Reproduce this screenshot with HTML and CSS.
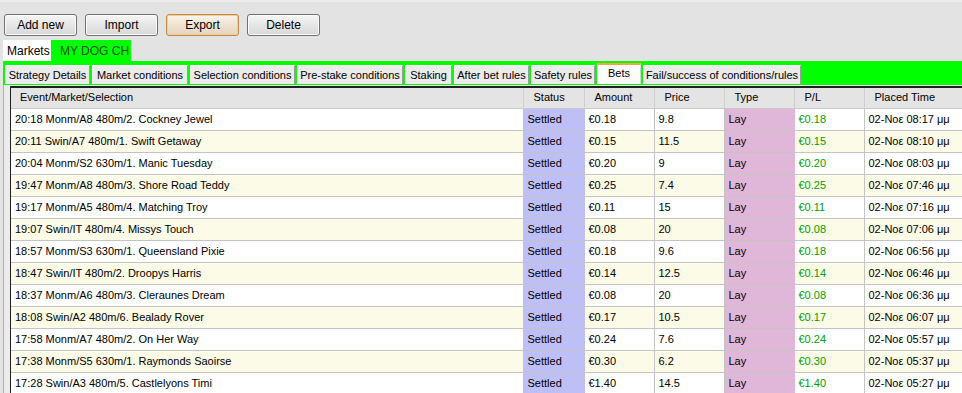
FILE: index.html
```html
<!DOCTYPE html>
<html>
<head>
<meta charset="utf-8">
<link rel="stylesheet" href="styles.css">
</head>
<body>
<div class="app">
  <div class="toolbar">
    <button class="btn">Add new</button>
    <button class="btn">Import</button>
    <button class="btn btn-focus">Export</button>
    <button class="btn">Delete</button>
  </div>
  <div class="outer-tabs">
    <div class="otab otab-plain">Markets</div>
    <div class="otab otab-green">MY DOG CH</div>
  </div>
  <div class="green-panel">
    <div class="itabs">
      <div class="itab w-strategy">Strategy Details</div>
      <div class="itab w-market">Market conditions</div>
      <div class="itab w-selection">Selection conditions</div>
      <div class="itab w-prestake">Pre-stake conditions</div>
      <div class="itab w-staking">Staking</div>
      <div class="itab w-after">After bet rules</div>
      <div class="itab w-safety">Safety rules</div>
      <div class="itab itab-active w-bets">Bets</div>
      <div class="itab w-fail">Fail/success of conditions/rules</div>
    </div>
  </div>
  <div class="content">
    <div class="grid-wrap">
      <table class="grid">
        <colgroup>
          <col class="c-event"><col class="c-status"><col class="c-num"><col class="c-num"><col class="c-num"><col class="c-num"><col class="c-time">
        </colgroup>
        <thead>
          <tr>
            <th class="h-event">Event/Market/Selection</th>
            <th class="h-status">Status</th>
            <th>Amount</th>
            <th>Price</th>
            <th>Type</th>
            <th>P/L</th>
            <th>Placed Time</th>
          </tr>
        </thead>
        <tbody>
          <tr><td>20:18 Monm/A8 480m/2. Cockney Jewel</td><td class="st">Settled</td><td>€0.18</td><td>9.8</td><td class="ty">Lay</td><td class="pl">€0.18</td><td>02-Νοε 08:17 μμ</td></tr>
          <tr class="alt"><td>20:11 Swin/A7 480m/1. Swift Getaway</td><td class="st">Settled</td><td>€0.15</td><td>11.5</td><td class="ty">Lay</td><td class="pl">€0.15</td><td>02-Νοε 08:10 μμ</td></tr>
          <tr><td>20:04 Monm/S2 630m/1. Manic Tuesday</td><td class="st">Settled</td><td>€0.20</td><td>9</td><td class="ty">Lay</td><td class="pl">€0.20</td><td>02-Νοε 08:03 μμ</td></tr>
          <tr class="alt"><td>19:47 Monm/A8 480m/3. Shore Road Teddy</td><td class="st">Settled</td><td>€0.25</td><td>7.4</td><td class="ty">Lay</td><td class="pl">€0.25</td><td>02-Νοε 07:46 μμ</td></tr>
          <tr><td>19:17 Monm/A5 480m/4. Matching Troy</td><td class="st">Settled</td><td>€0.11</td><td>15</td><td class="ty">Lay</td><td class="pl">€0.11</td><td>02-Νοε 07:16 μμ</td></tr>
          <tr class="alt"><td>19:07 Swin/IT 480m/4. Missys Touch</td><td class="st">Settled</td><td>€0.08</td><td>20</td><td class="ty">Lay</td><td class="pl">€0.08</td><td>02-Νοε 07:06 μμ</td></tr>
          <tr><td>18:57 Monm/S3 630m/1. Queensland Pixie</td><td class="st">Settled</td><td>€0.18</td><td>9.6</td><td class="ty">Lay</td><td class="pl">€0.18</td><td>02-Νοε 06:56 μμ</td></tr>
          <tr class="alt"><td>18:47 Swin/IT 480m/2. Droopys Harris</td><td class="st">Settled</td><td>€0.14</td><td>12.5</td><td class="ty">Lay</td><td class="pl">€0.14</td><td>02-Νοε 06:46 μμ</td></tr>
          <tr><td>18:37 Monm/A6 480m/3. Cleraunes Dream</td><td class="st">Settled</td><td>€0.08</td><td>20</td><td class="ty">Lay</td><td class="pl">€0.08</td><td>02-Νοε 06:36 μμ</td></tr>
          <tr class="alt"><td>18:08 Swin/A2 480m/6. Bealady Rover</td><td class="st">Settled</td><td>€0.17</td><td>10.5</td><td class="ty">Lay</td><td class="pl">€0.17</td><td>02-Νοε 06:07 μμ</td></tr>
          <tr><td>17:58 Monm/A7 480m/2. On Her Way</td><td class="st">Settled</td><td>€0.24</td><td>7.6</td><td class="ty">Lay</td><td class="pl">€0.24</td><td>02-Νοε 05:57 μμ</td></tr>
          <tr class="alt"><td>17:38 Monm/S5 630m/1. Raymonds Saoirse</td><td class="st">Settled</td><td>€0.30</td><td>6.2</td><td class="ty">Lay</td><td class="pl">€0.30</td><td>02-Νοε 05:37 μμ</td></tr>
          <tr><td>17:28 Swin/A3 480m/5. Castlelyons Timi</td><td class="st">Settled</td><td>€1.40</td><td>14.5</td><td class="ty">Lay</td><td class="pl">€1.40</td><td>02-Νοε 05:27 μμ</td></tr>
        </tbody>
      </table>
    </div>
  </div>
</div>
</body>
</html>
```

FILE: styles.css
```css
html, body {
  margin: 0;
  padding: 0;
  background: #e3e3e3;
  font-family: "Liberation Sans", Arial, sans-serif;
  font-size: 11px;
  color: #000;
  overflow: hidden;
}

.app {
  width: 962px;
  height: 393px;
  overflow: hidden;
  border-top: 2px solid #ececec;
  box-sizing: border-box;
}

.toolbar {
  display: flex;
  gap: 8px;
  padding: 12px 0 0 4px;
  height: 22px;
}

.btn {
  width: 73px;
  height: 22px;
  padding: 0;
  font-family: inherit;
  font-size: 12px;
  color: #000;
  border: 1px solid #707070;
  border-radius: 3px;
  background: linear-gradient(#f6f6f6, #e6e6e6 50%, #d8d8d8);
  box-shadow: inset 0 0 0 1px #fbfbfb;
}

.btn-focus {
  border-color: #c08a48;
  background: linear-gradient(#fbf4ea, #efe3d2 50%, #e4d4bd);
  box-shadow: inset 0 0 0 1px #f4cc94;
}

.outer-tabs {
  display: flex;
  margin-top: 4px;
  padding-left: 3px;
  height: 21px;
}

.otab {
  display: flex;
  align-items: center;
  box-sizing: border-box;
  height: 21px;
  font-size: 12px;
}

.otab-plain {
  width: 48px;
  padding-left: 4px;
  background: #ffffff;
}

.otab-green {
  width: 80px;
  padding-left: 9px;
  background: #00ff00;
  color: #1e4d1e;
}

.green-panel {
  margin-left: 3px;
  height: 24px;
  background: #00ff00;
  box-sizing: border-box;
  padding: 2px 0 0 2px;
}

.itabs {
  display: flex;
  align-items: flex-end;
  gap: 2px;
  height: 21px;
}

.itab {
  height: 19px;
  box-sizing: border-box;
  display: flex;
  align-items: center;
  justify-content: center;
  background: #ebebeb;
  border-left: 1px solid #ffffff;
  border-top: 1px solid #ffffff;
  border-right: 1px solid #9c9c9c;
  white-space: nowrap;
  font-size: 11px;
}

.w-strategy { width: 85px; }
.w-market { width: 96px; }
.w-selection { width: 105px; }
.w-prestake { width: 106px; }
.w-staking { width: 47px; }
.w-after { width: 75px; }
.w-safety { width: 64px; }
.w-bets { width: 44px; }
.w-fail { width: 158px; }

.itab-active {
  height: 21px;
  background: #fcfcfc;
  border-left-color: #ffffff;
  border-right-color: #d8d8d8;
  border-top: 2px solid #f3a14a;
  padding-bottom: 3px;
}

.content {
  margin-left: 3px;
  border-left: 1px solid #b0b0b0;
  padding: 1px 0 0 6px;
  background: #ececec;
  height: 320px;
}

.grid-wrap {
  border-top: 2px solid #202020;
  border-left: 1px solid #202020;
  background: #ffffff;
  height: 320px;
}

.grid {
  border-collapse: collapse;
  table-layout: fixed;
  width: 960px;
}

.c-event { width: 512px; }
.c-status { width: 61px; }
.c-num { width: 70px; }
.c-time { width: 107px; }

.grid th {
  height: 20px;
  padding: 0 0 1px 10px;
  box-sizing: border-box;
  text-align: left;
  font-weight: normal;
  background: #e4e4e4;
  border-right: 1px solid #cfcfcf;
  border-bottom: 1px solid #c8c8c8;
  white-space: nowrap;
}

.grid th.h-event { padding-left: 9px; }

.grid td {
  height: 22px;
  box-sizing: border-box;
  padding: 0 0 0 4px;
  border-right: 1px solid #c4c4c4;
  border-bottom: 1px solid #c4c4c4;
  white-space: nowrap;
  overflow: hidden;
}

.grid tr.alt td { background: #fbfbe8; }

.grid td.st, .grid tr.alt td.st {
  background: #bfbff7;
  border-right-color: #bfbff7;
}

.grid td.ty, .grid tr.alt td.ty {
  background: #e1b7d9;
  border-right-color: #e1b7d9;
}

.grid td.pl { color: #00a000; }
```
